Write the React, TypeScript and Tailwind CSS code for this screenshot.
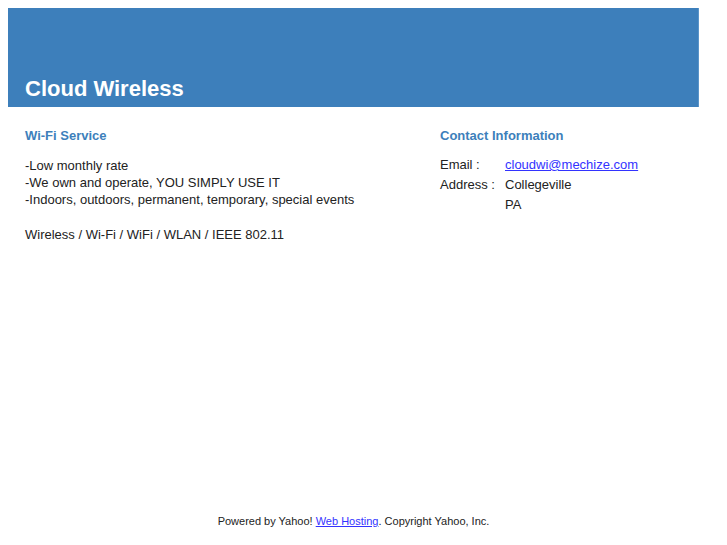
export default function App() {
  return (
    <div
      className="flex min-h-[545px] flex-col bg-white px-2 pt-2 text-[13px] text-[#222]"
      style={{ fontFamily: '"Liberation Sans", Arial, sans-serif' }}
    >
      <div className="w-[691px]">
        <header className="flex h-[99px] items-end border-r border-[#5b95c9] bg-[#3d7fbb] pb-[4px] pl-[17px]">
          <h1 className="text-[22px] font-bold leading-[28px] text-white">Cloud Wireless</h1>
        </header>

        <div className="mt-[21px] flex">
          <section className="w-[432px] pl-[17px]">
            <h2 className="text-[13px] font-bold leading-[16px] text-[#3d7fbb]">Wi-Fi Service</h2>
            <div className="mt-[13px] leading-[17px]">
              <p>-Low monthly rate</p>
              <p>-We own and operate, YOU SIMPLY USE IT</p>
              <p>-Indoors, outdoors, permanent, temporary, special events</p>
              <p className="mt-[18px]">Wireless / Wi-Fi / WiFi / WLAN / IEEE 802.11</p>
            </div>
          </section>

          <section className="flex-1">
            <h2 className="text-[13px] font-bold leading-[16px] text-[#3d7fbb]">Contact Information</h2>
            <div className="mt-[11px] grid grid-cols-[65px_1fr] leading-[20px]">
              <span>Email :</span>
              <a href="#" className="text-[#3333ff] underline">
                cloudwi@mechize.com
              </a>
              <span>Address :</span>
              <span>Collegeville</span>
              <span />
              <span>PA</span>
            </div>
          </section>
        </div>
      </div>

      <footer className="mt-auto mb-[17px] w-[691px] text-center text-[11px] leading-[13px] text-[#222]">
        Powered by Yahoo!{" "}
        <a href="#" className="text-[#3333ff] underline">
          Web Hosting
        </a>
        . Copyright Yahoo, Inc.
      </footer>
    </div>
  );
}
